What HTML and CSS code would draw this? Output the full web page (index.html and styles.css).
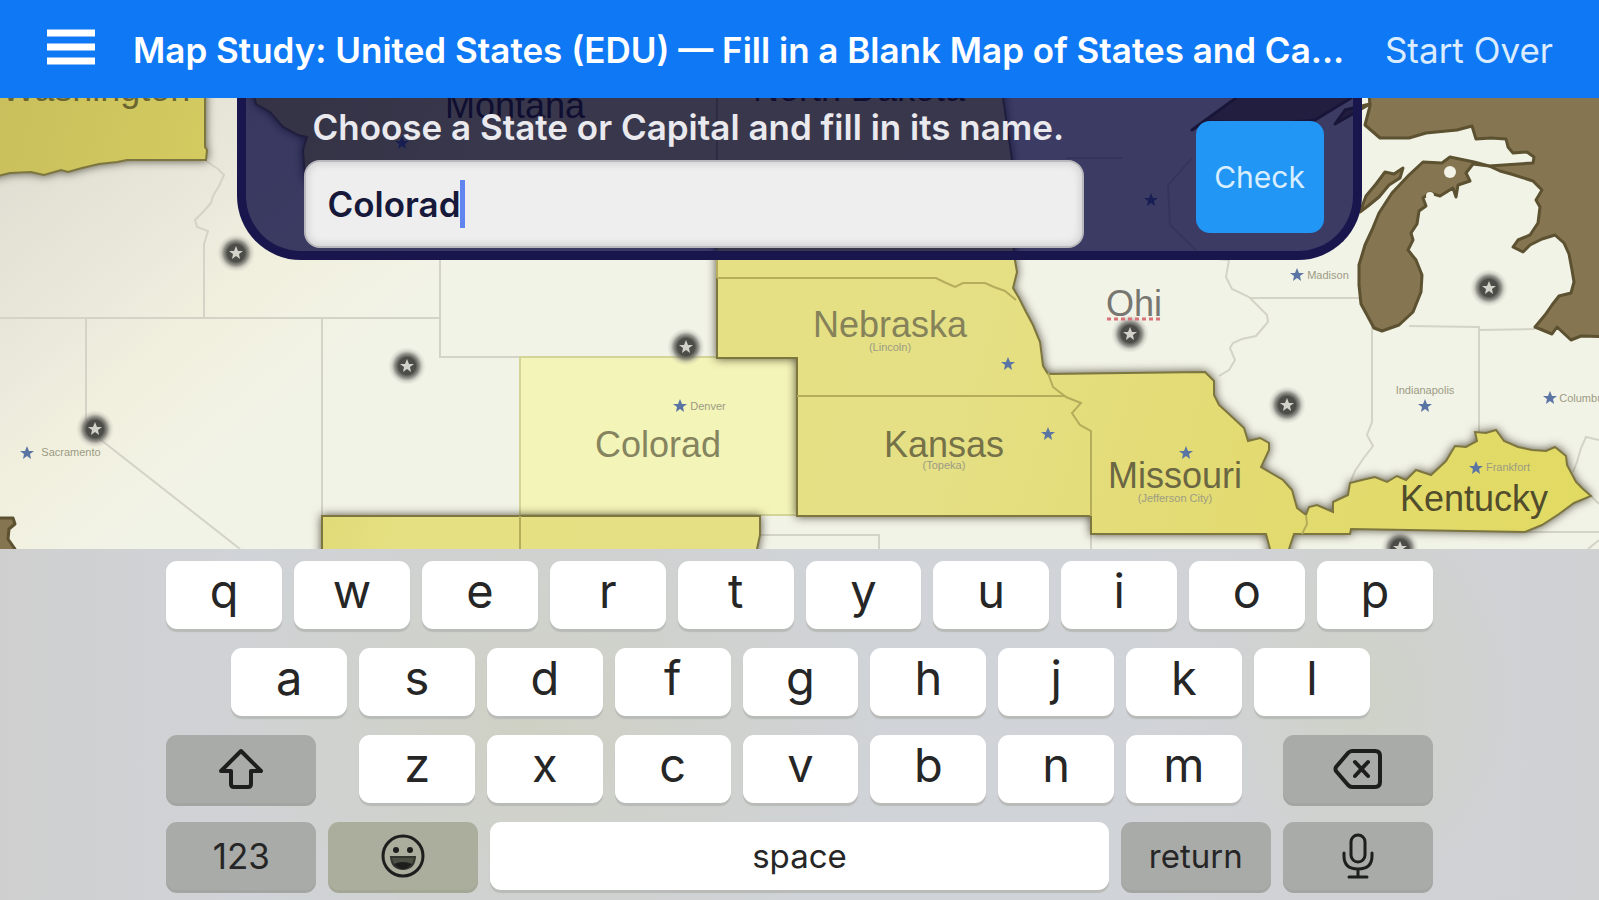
FILE: index.html
```html
<!DOCTYPE html>
<html lang="en">
<head>
    <meta charset="UTF-8">
    <meta name="viewport" content="width=device-width, initial-scale=1.0">
    <title>Map Study: United States</title>
    <link rel="stylesheet" href="styles.css">
</head>
<body>
    <header class="topbar">
        <button class="menu-button" type="button" aria-label="Menu">
            <svg width="48" height="36" viewBox="0 0 48 36"><path d="M0 4h48M0 18h48M0 32h48" stroke="#fff" stroke-width="7"/></svg>
        </button>
        <h1 class="title">Map Study: United States (EDU) — Fill in a Blank Map of States and Ca...</h1>
        <button class="start-over" type="button">Start Over</button>
    </header>

    <main class="map-area">
        <svg class="map" viewBox="0 98 1599 451" preserveAspectRatio="xMidYMid slice" role="img" aria-label="Map of the United States">
            <defs>
                <linearGradient id="land" gradientUnits="userSpaceOnUse" x1="0" y1="120" x2="260" y2="430">
                    <stop offset="0" stop-color="#dddcd0"/>
                    <stop offset="0.5" stop-color="#ebe9dc"/>
                    <stop offset="0.7" stop-color="#f1f0de"/>
                    <stop offset="1" stop-color="#f2f3e7"/>
                </linearGradient>
                <linearGradient id="filled" gradientUnits="userSpaceOnUse" x1="0" y1="98" x2="1599" y2="549">
                    <stop offset="0" stop-color="#c9bf5c"/>
                    <stop offset="0.13" stop-color="#d3cb60"/>
                    <stop offset="0.3" stop-color="#e5e081"/>
                    <stop offset="0.6" stop-color="#e5e085"/>
                    <stop offset="0.75" stop-color="#e3db74"/>
                    <stop offset="1" stop-color="#e1da61"/>
                </linearGradient>
                <radialGradient id="glow">
                    <stop offset="0" stop-color="#4c4c48"/>
                    <stop offset="0.45" stop-color="#4c4c48"/>
                    <stop offset="0.65" stop-color="#6b6b66" stop-opacity="0.7"/>
                    <stop offset="0.8" stop-color="#8f8f89" stop-opacity="0.3"/>
                    <stop offset="1" stop-color="#b4b4ae" stop-opacity="0"/>
                </radialGradient>
                <path id="star" d="M0 -7L2 -2L7 -2L3 1L4 6L0 3L-4 6L-3 1L-7 -2L-2 -2Z"/>
                <g id="capital">
                    <circle r="19" fill="url(#glow)"/>
                    <use href="#star" fill="#d2d2ca"/>
                </g>
            </defs>

            <rect x="0" y="98" width="1599" height="451" fill="url(#land)"/>

            <!-- borders of states that are still blank -->
            <g class="border">
                <path d="M206 161L218 169L224 175L219 186L213 196L211 203L203 212L195 220L197 227L208 231L204 244V318"/>
                <path d="M0 318H440M86 318V420L96 436L240 549M322 318V515M440 255V357H520"/>
                <path d="M760 535H879V549M1091 534V549"/>
                <path d="M1229 260L1226 277L1232 289L1249 297L1258 306L1267 315L1268 322L1256 336L1242 339L1233 343L1230 348L1235 360L1229 370L1219 376"/>
                <path d="M1250 298H1360M1372 325V422L1367 435L1373 446L1363 459L1355 471L1350 483M1409 326L1479 327V432M1479 330L1535 329"/>
                <path d="M1599 440L1586 437L1581 448L1577 462L1573 472M1525 532H1599M1591 496L1599 504M1599 540L1588 549M1066 158H1122M1229 260L1204 258L1170 225L1168 185L1192 158"/>
            </g>

            <!-- the state that is being typed -->
            <rect x="520" y="357" width="277" height="158" fill="#f3f4b7" stroke="#d4d398" stroke-width="2"/>

            <!-- filled states -->
            <g class="filled">
                <path d="M-10 80H205V147L207 150L206 160H127L117 162L99 164L82 168L68 172L61 170L44 175L31 172L10 173L-10 178Z"/>
                <path d="M250 80L256 104L270 112L283 127L298 135L307 137L303 150L305 178L330 205L440 215H717V358H797V516H1091V534H1266L1270 549L1267 562H1293L1289 549L1294 534H1350L1351 529L1525 532L1542 525L1559 514L1574 503L1591 496L1583 489L1576 482L1567 465L1566 456L1555 447L1546 451L1532 450L1518 447L1504 441L1496 430L1486 433L1475 432L1477 441L1466 447L1455 446L1446 461L1431 475L1416 470L1406 480L1397 476L1387 482L1375 477L1362 480L1350 483L1348 495L1333 502V512L1317 505L1309 507L1306 515L1297 508L1292 490L1283 480L1261 467L1269 450L1269 443L1260 438L1248 441L1244 428L1230 415L1219 405L1214 395V381L1205 372L1048 374L1043 366L1040 342L1033 325L1026 312L1019 298L1013 288L1017 272L1014 255L1012 160L1003 98V80Z"/>
                <path d="M322 516H760V535L757 549V565H322Z"/>
            </g>
            <g class="inner-border">
                <path d="M717 278H936L944 282L955 287L963 283H985L994 287L1005 291L1016 300"/>
                <path d="M797 396H1066M1048 373L1053 387L1066 397L1081 403L1072 413L1080 425L1091 431V516M1306 515L1307 524L1302 534M520 516V549M717 98V278M717 178H1012"/>
            </g>

            <!-- lakes and coast -->
            <g class="water">
                <path d="M1368 80L1370 106L1365 125L1380 138L1398 138L1409 138L1426 133L1457 130L1472 126L1476 139L1491 138L1506 139L1508 147L1513 153L1527 152L1534 157L1533 163L1489 166L1500 171L1511 174L1533 181L1542 190L1536 200L1540 207L1538 223L1530 235L1518 240L1513 247L1523 252L1530 245L1542 239L1555 235L1564 243L1569 254L1572 270L1574 282L1571 293L1559 296L1552 305L1545 315L1535 327L1552 334L1557 327L1571 340L1581 336L1610 337V80Z"/>
                <path d="M1489 166L1474 162L1450 157L1442 163L1423 162L1409 175L1392 193L1379 213L1372 230L1365 245L1359 265V285L1361 304L1367 315L1374 328L1382 331L1399 325L1413 312L1421 292L1422 275L1416 260L1408 250L1413 240L1411 233L1417 224L1419 211L1426 206L1423 198L1430 193L1440 196L1453 188L1456 197L1458 185L1470 181L1466 173L1473 164Z"/>
                <path d="M1360 212L1366 196L1376 184L1385 172L1394 174L1403 168L1400 178L1389 185L1379 197L1368 206Z"/>
                <path d="M1192 130L1207 119L1236 98L1240 80H1352L1351 98L1315 120L1270 124L1205 121ZM1335 124L1345 110L1370 104Z"/>
                <path d="M-10 518H13L15 524L9 529L8 539L15 549V560H-10Z"/>
            </g>
            <g class="island">
                <circle cx="1450" cy="172" r="6"/>
                <circle cx="1430" cy="196" r="4"/>
            </g>

            <g class="city-star">
                <use href="#star" x="27" y="453"/>
                <use href="#star" x="680" y="406"/>
                <use href="#star" x="1008" y="364"/>
                <use href="#star" x="1048" y="434"/>
                <use href="#star" x="1186" y="453"/>
                <use href="#star" x="1297" y="275"/>
                <use href="#star" x="1425" y="406"/>
                <use href="#star" x="1550" y="398"/>
                <use href="#star" x="1476" y="468"/>
                <use href="#star" x="402" y="143"/>
                <use href="#star" x="1151" y="200"/>
            </g>

            <use href="#capital" x="236" y="253"/>
            <use href="#capital" x="407" y="366"/>
            <use href="#capital" x="95" y="429"/>
            <use href="#capital" x="686" y="347"/>
            <use href="#capital" x="1130" y="334"/>
            <use href="#capital" x="1287" y="405"/>
            <use href="#capital" x="1489" y="288"/>
            <use href="#capital" x="1400" y="548"/>

            <g class="city">
                <text x="71" y="456">Sacramento</text>
                <text x="708" y="410">Denver</text>
                <text x="1328" y="279">Madison</text>
                <text x="1425" y="394">Indianapolis</text>
                <text x="1584" y="402">Columbus</text>
                <text x="1508" y="471">Frankfort</text>
                <text x="890" y="351">(Lincoln)</text>
                <text x="944" y="469">(Topeka)</text>
                <text x="1175" y="502">(Jefferson City)</text>
            </g>
            <g class="state">
                <text x="96" y="101" fill="#6b6530">Washington</text>
                <text class="under" x="515" y="118">Montana</text>
                <text class="under" x="859" y="101">North Dakota</text>
                <text x="890" y="337" fill="#85825a">Nebraska</text>
                <text x="658" y="457" fill="#85845f">Colorad</text>
                <text x="944" y="457" fill="#757148">Kansas</text>
                <text x="1175" y="488" fill="#6b6743">Missouri</text>
                <text x="1474" y="511" fill="#514d2c">Kentucky</text>
                <text x="1134" y="316" fill="#777670">Ohi</text>
            </g>
            <path d="M1107 319H1162" stroke="#d8717a" stroke-width="3" stroke-dasharray="4 3"/>
        </svg>

        <form class="answer-panel">
            <div class="answer">
                <label for="answer">Choose a State or Capital and fill in its name.</label>
                <div class="answer-box">
                    <input type="text" id="answer" value="Colorad" autocomplete="off" spellcheck="false">
                    <span class="caret"></span>
                </div>
            </div>
            <button class="check" type="button">Check</button>
        </form>
    </main>

    <section class="keyboard" aria-label="Keyboard">
        <div class="row">
            <button class="key">q</button>
            <button class="key">w</button>
            <button class="key">e</button>
            <button class="key">r</button>
            <button class="key">t</button>
            <button class="key">y</button>
            <button class="key">u</button>
            <button class="key">i</button>
            <button class="key">o</button>
            <button class="key">p</button>
        </div>
        <div class="row row-home">
            <button class="key">a</button>
            <button class="key">s</button>
            <button class="key">d</button>
            <button class="key">f</button>
            <button class="key">g</button>
            <button class="key">h</button>
            <button class="key">j</button>
            <button class="key">k</button>
            <button class="key">l</button>
        </div>
        <div class="row">
            <button class="key special" aria-label="Shift">
                <svg width="46" height="42" viewBox="0 0 46 42" fill="none" stroke="#1d1e1d" stroke-width="4" stroke-linejoin="round"><path d="M23 3L43 23H33V36Q33 39 30 39H16Q13 39 13 36V23H3Z"/></svg>
            </button>
            <div class="row letters">
                <button class="key">z</button>
                <button class="key">x</button>
                <button class="key">c</button>
                <button class="key">v</button>
                <button class="key">b</button>
                <button class="key">n</button>
                <button class="key">m</button>
            </div>
            <button class="key special" aria-label="Delete">
                <svg width="50" height="42" viewBox="0 0 50 42" fill="none" stroke="#1d1e1d" stroke-width="4" stroke-linejoin="round" stroke-linecap="round"><path d="M19 3H42Q47 3 47 8V34Q47 39 42 39H19Q17 39 15 37L3 23Q2 21 3 19L15 5Q17 3 19 3ZM22 14L35 28M35 14L22 28"/></svg>
            </button>
        </div>
        <div class="row">
            <button class="key special number">123</button>
            <button class="key special olive" aria-label="Emoji">
                <svg width="46" height="46" viewBox="0 0 46 46" fill="none" stroke="#1d1e1d" stroke-width="3"><circle cx="23" cy="23" r="20"/><circle cx="16" cy="17" r="3" fill="#1d1e1d" stroke="none"/><circle cx="30" cy="17" r="3" fill="#1d1e1d" stroke="none"/><path d="M11 24H35Q34 36 23 36Q12 36 11 24Z" fill="#4c4f44" stroke="#33352e" stroke-width="2"/><path d="M14 31Q23 27 32 31Q23 41 14 31Z" fill="#1d1e1d" stroke="none"/></svg>
            </button>
            <button class="key space">space</button>
            <button class="key special return">return</button>
            <button class="key special" aria-label="Dictate">
                <svg width="36" height="48" viewBox="0 0 36 48" fill="none" stroke="#1d1e1d" stroke-width="3" stroke-linecap="round"><rect x="11" y="3" width="14" height="27" rx="7"/><path d="M4 21V24Q4 37 18 37Q32 37 32 24V21M18 37V45M9 45H27"/></svg>
            </button>
        </div>
    </section>
</body>
</html>
```
FILE: styles.css
```css
* {
    box-sizing: border-box;
}
body {
    margin: 0;
    min-height: 100vh;
    display: flex;
    flex-direction: column;
    font-family: Inter, "Liberation Sans", sans-serif;
    background: #d0d2d3;
}
button {
    font-family: inherit;
    border: none;
    padding: 0;
    cursor: pointer;
}
.topbar {
    display: flex;
    align-items: center;
    height: 98px;
    padding: 2px 46px 0 47px;
    background: #0f79f5;
    color: #fff;
}
.menu-button {
    display: flex;
    padding-bottom: 6px;
    background: none;
}
.title {
    flex: 1;
    min-width: 0;
    margin: 0 0 0 38px;
    font-size: 35px;
    font-weight: 600;
    line-height: 44px;
    white-space: nowrap;
    overflow: hidden;
}
.start-over {
    background: none;
    color: #dcecff;
    font-size: 35px;
    line-height: 44px;
    white-space: nowrap;
}

/* map */
.map-area {
    position: relative;
    flex: 1;
    min-height: 300px;
    overflow: hidden;
}
.map {
    position: absolute;
    width: 100%;
    height: 100%;
}
.border path {
    fill: none;
    stroke: #d3d3c6;
    stroke-width: 2;
}
.filled {
    filter: drop-shadow(0 0 5px rgba(50, 45, 30, 0.8));
}
.filled path {
    fill: url(#filled);
    stroke: #7d763f;
    stroke-width: 2;
}
.inner-border path {
    fill: none;
    stroke: #b5ac5c;
    stroke-width: 2;
}
.water path {
    fill: #857551;
    stroke: #5c5130;
    stroke-width: 3;
    stroke-linejoin: round;
}
.island {
    fill: #f2f3e6;
}
.city-star {
    fill: #5a74a4;
}
.city text {
    font-family: "Liberation Sans", sans-serif;
    font-size: 11px;
    text-anchor: middle;
    fill: #9c9b84;
}
.state text {
    font-family: "Liberation Sans", sans-serif;
    font-size: 36px;
    text-anchor: middle;
}
.state .under {
    fill: #35320c;
}

/* answer panel */
.answer-panel {
    position: absolute;
    top: 0;
    left: 0;
    right: 0;
    width: 70.3%;
    margin: 0 auto;
    display: flex;
    justify-content: space-between;
    align-items: flex-start;
    padding: 0 29px 3px 58px;
    background: rgba(4, 4, 60, 0.77);
    border: 9px solid #18164c;
    border-top: none;
    border-radius: 0 0 64px 64px;
}
.answer {
    width: 76.5%;
}
.answer label {
    display: block;
    height: 62px;
    padding: 8px 0 0 8px;
    font-size: 35px;
    font-weight: 600;
    line-height: 42px;
    color: #e9e9ee;
    white-space: nowrap;
}
.answer-box {
    position: relative;
}
.answer input {
    display: block;
    width: 100%;
    height: 88px;
    padding: 0 21px;
    border: 2px solid #b9b9bd;
    border-radius: 16px;
    background: #eee;
    box-shadow: inset 0 0 6px 3px #d6d6d8;
    font-family: inherit;
    font-size: 35px;
    font-weight: 600;
    color: #17193a;
    outline: none;
}
.caret {
    position: absolute;
    top: 20px;
    left: 156px;
    width: 5px;
    height: 48px;
    background: #6284ee;
}
.check {
    width: 128px;
    height: 112px;
    margin-top: 23px;
    border-radius: 14px;
    background: #2196f5;
    color: #d8eeff;
    font-size: 30px;
}

/* keyboard */
.keyboard {
    display: flex;
    flex-direction: column;
    gap: 19px;
    padding: 12px 10.4% 10px;
    background:
        radial-gradient(22% 75% at 33% 50%, rgba(207, 208, 194, 0.9), rgba(207, 208, 194, 0)),
        radial-gradient(10% 60% at 85% 42%, rgba(207, 210, 198, 0.9), rgba(207, 210, 198, 0)),
        linear-gradient(90deg, #cfcfcf, #d0d3d7 15%, #d0d3d7 70%, #d0d1d3);
}
.row {
    display: flex;
    gap: 12px;
}
.row-home {
    padding: 0 63px 0 65px;
}
.letters {
    flex: 1;
    margin: 0 29px 0 31px;
}
.key {
    flex: 1;
    height: 68px;
    display: flex;
    align-items: center;
    justify-content: center;
    padding-bottom: 8px;
    border-radius: 11px;
    background: #fff;
    box-shadow: 0 3px 1px #b9bbb8;
    color: #262626;
    font-size: 47px;
    line-height: 56px;
}
.special {
    flex: none;
    width: 150px;
    padding-bottom: 0;
    background: #a9aba8;
    box-shadow: 0 3px 0 #a3a5a2;
}
.olive {
    background: #abae9d;
    box-shadow: 0 3px 0 #a4a796;
}
.number {
    font-size: 35px;
}
.space, .return {
    padding-bottom: 0;
    font-size: 33px;
}
```
